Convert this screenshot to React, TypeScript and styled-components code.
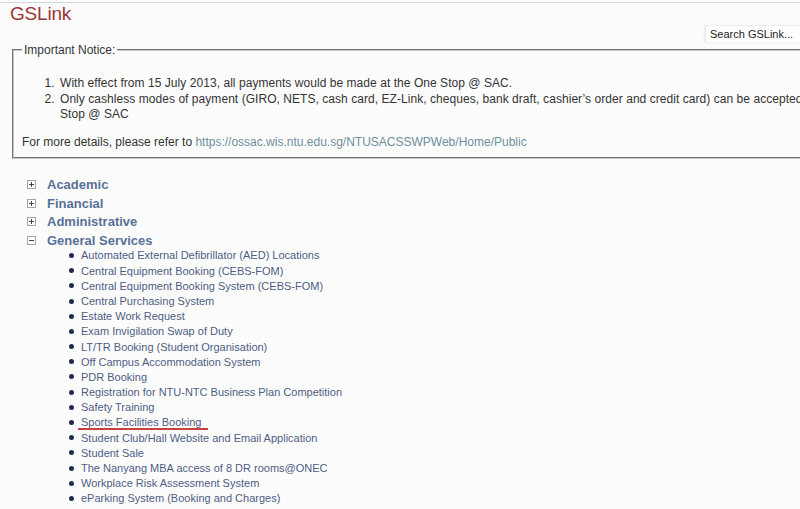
import React from "react";
import styled, { createGlobalStyle } from "styled-components";

const Global = createGlobalStyle`
  html, body { margin: 0; padding: 0; }
  body {
    background: #fdfcfd;
    font-family: "Liberation Sans", Arial, Helvetica, sans-serif;
    color: #333;
    overflow: hidden;
    width: 800px;
  }
`;

const Page = styled.div`
  width: 800px;
  height: 509px;
  overflow: hidden;
  border-top: 1px solid #d6d6d6;
  margin-top: 2px;
  box-sizing: border-box;
`;

const Header = styled.header`
  padding: 0 0 0 10px;
  height: 22px;
`;

const Title = styled.h1`
  margin: 0;
  font-size: 19px;
  line-height: 22px;
  font-weight: normal;
  color: #9e3536;
  letter-spacing: -0.2px;
`;

const SearchRow = styled.div`
  display: flex;
  justify-content: flex-end;
  height: 17px;
`;

const Search = styled.input`
  width: 95px;
  height: 17px;
  box-sizing: border-box;
  border: none;
  border-left: 1px solid #e6e6e6;
  border-top: 1px solid #eee;
  box-shadow: -1px 1px 2px rgba(0, 0, 0, 0.06);
  background: #fff;
  font-family: "Liberation Sans", Arial, sans-serif;
  font-size: 11px;
  color: #222;
  padding: 0 0 0 4px;
  margin: 0;
  outline: none;
  &::placeholder { color: #222; }
`;

const Notice = styled.fieldset`
  margin: 1px 0 0 12px;
  width: 1000px;
  padding: 0 0 6px 8px;
  border: 2px groove #c8c8c8;
  border-right: none;
  box-sizing: border-box;
`;

const Legend = styled.legend`
  font-size: 12px;
  line-height: 14px;
  padding: 0 2px;
  color: #333;
`;

const NoticeList = styled.ol`
  margin: 19px 0 0 0;
  padding-left: 36px;
  font-size: 12px;
  line-height: 15.5px;
  letter-spacing: 0.05px;
`;

const NoticeItem = styled.li`
  padding-left: 2px;
`;

const More = styled.p`
  margin: 12.5px 0 0 0;
  font-size: 12px;
  line-height: 15.5px;
`;

const Link = styled.a`
  color: #6d8e9c;
  text-decoration: none;
`;

const Tree = styled.div`
  margin-top: 17px;
  padding-left: 27px;
`;

const Heading = styled.div`
  display: flex;
  align-items: center;
  gap: 11px;
  height: 18.6px;
  font-size: 13px;
  font-weight: bold;
  color: #577196;
`;

const Toggle = styled.span<{ open?: boolean }>`
  position: relative;
  width: 9px;
  height: 9px;
  box-sizing: border-box;
  border: 1px solid #a4a4a4;
  background: #fff;
  flex: none;
  &::before {
    content: "";
    position: absolute;
    left: 1px;
    right: 1px;
    top: 3px;
    height: 1px;
    background: #444;
  }
  &::after {
    content: "";
    display: ${(p) => (p.open ? "none" : "block")};
    position: absolute;
    top: 1px;
    bottom: 1px;
    left: 3px;
    width: 1px;
    background: #444;
  }
`;

const SubList = styled.ul`
  list-style: none;
  margin: -2px 0 0 42px;
  padding: 0;
`;

const SubItem = styled.li`
  display: flex;
  align-items: center;
  gap: 7px;
  height: 15.2px;
  font-size: 11px;
  color: #4d5d84;
  white-space: nowrap;
`;

const Bullet = styled.span`
  width: 5px;
  height: 5px;
  border-radius: 50%;
  background: #1f2b52;
  flex: none;
`;

const Marked = styled.span`
  margin-left: -3px;
  padding: 0 7px 0 3px;
  border-bottom: 2px solid #c8423b;
`;

const headings = ["Academic", "Financial", "Administrative"];

const services = [
  "Automated External Defibrillator (AED) Locations",
  "Central Equipment Booking (CEBS-FOM)",
  "Central Equipment Booking System (CEBS-FOM)",
  "Central Purchasing System",
  "Estate Work Request",
  "Exam Invigilation Swap of Duty",
  "LT/TR Booking (Student Organisation)",
  "Off Campus Accommodation System",
  "PDR Booking",
  "Registration for NTU-NTC Business Plan Competition",
  "Safety Training",
  "Sports Facilities Booking",
  "Student Club/Hall Website and Email Application",
  "Student Sale",
  "The Nanyang MBA access of 8 DR rooms@ONEC",
  "Workplace Risk Assessment System",
  "eParking System (Booking and Charges)",
];

export default function App() {
  return (
    <Page>
      <Global />
      <Header>
        <Title>GSLink</Title>
      </Header>
      <SearchRow>
        <Search placeholder="Search GSLink..." />
      </SearchRow>
      <Notice>
        <Legend>Important Notice:</Legend>
        <NoticeList>
          <NoticeItem>
            With effect from 15 July 2013, all payments would be made at the One Stop @ SAC.
          </NoticeItem>
          <NoticeItem>
            Only cashless modes of payment (GIRO, NETS, cash card, EZ-Link, cheques, bank draft,
            cashier’s order and credit card) can be accepted at the One
            <br />
            Stop @ SAC
          </NoticeItem>
        </NoticeList>
        <More>
          For more details, please refer to{" "}
          <Link href="#">https://ossac.wis.ntu.edu.sg/NTUSACSSWPWeb/Home/Public</Link>
        </More>
      </Notice>
      <Tree>
        {headings.map((h) => (
          <Heading key={h}>
            <Toggle />
            {h}
          </Heading>
        ))}
        <Heading>
          <Toggle open />
          General Services
        </Heading>
        <SubList>
          {services.map((s) => (
            <SubItem key={s}>
              <Bullet />
              {s === "Sports Facilities Booking" ? <Marked>{s}</Marked> : s}
            </SubItem>
          ))}
        </SubList>
      </Tree>
    </Page>
  );
}
